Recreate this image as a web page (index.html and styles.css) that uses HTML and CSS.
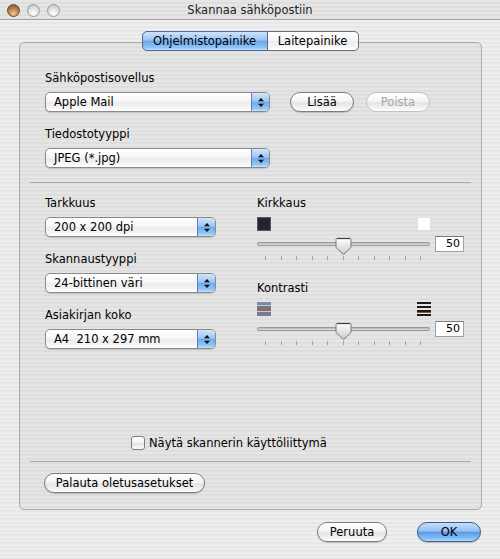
FILE: index.html
```html
<!DOCTYPE html>
<html lang="fi">
  <head>
    <meta charset="UTF-8" />
    <meta name="viewport" content="width=device-width, initial-scale=1.0" />
    <title>Skannaa sähköpostiin</title>
    <link rel="stylesheet" href="styles.css">
  </head>
  <body>
    <div class="window">
      <div class="titlebar">
        <div class="lights">
          <span class="light light-close"></span>
          <span class="light"></span>
          <span class="light"></span>
        </div>
        <div class="title">Skannaa sähköpostiin</div>
      </div>

      <div class="tabs">
        <span class="tab tab-active">Ohjelmistopainike</span>
        <span class="tab tab-plain">Laitepainike</span>
      </div>

      <div class="groupbox">
        <div class="section">
          <div class="label">Sähköpostisovellus</div>
          <div class="row">
            <div class="popup popup-wide">
              <span class="popup-text">Apple Mail</span>
              <span class="popup-arrows"><svg width="6" height="9" viewBox="0 0 6 9"><path d="M3 0 L6 3.2 H0 Z M0 5.8 H6 L3 9 Z" fill="#111"/></svg></span>
            </div>
            <button class="button btn-add">Lisää</button>
            <button class="button btn-remove" disabled>Poista</button>
          </div>
          <div class="label label-next">Tiedostotyyppi</div>
          <div class="popup popup-wide">
            <span class="popup-text">JPEG (*.jpg)</span>
            <span class="popup-arrows"><svg width="6" height="9" viewBox="0 0 6 9"><path d="M3 0 L6 3.2 H0 Z M0 5.8 H6 L3 9 Z" fill="#111"/></svg></span>
          </div>
        </div>

        <div class="separator"></div>

        <div class="columns">
          <div class="col-left">
            <div class="label">Tarkkuus</div>
            <div class="popup popup-narrow">
              <span class="popup-text">200 x 200 dpi</span>
              <span class="popup-arrows"><svg width="6" height="9" viewBox="0 0 6 9"><path d="M3 0 L6 3.2 H0 Z M0 5.8 H6 L3 9 Z" fill="#111"/></svg></span>
            </div>
            <div class="label label-next">Skannaustyyppi</div>
            <div class="popup popup-narrow">
              <span class="popup-text">24-bittinen väri</span>
              <span class="popup-arrows"><svg width="6" height="9" viewBox="0 0 6 9"><path d="M3 0 L6 3.2 H0 Z M0 5.8 H6 L3 9 Z" fill="#111"/></svg></span>
            </div>
            <div class="label label-next">Asiakirjan koko</div>
            <div class="popup popup-narrow">
              <span class="popup-text">A4&nbsp; 210 x 297 mm</span>
              <span class="popup-arrows"><svg width="6" height="9" viewBox="0 0 6 9"><path d="M3 0 L6 3.2 H0 Z M0 5.8 H6 L3 9 Z" fill="#111"/></svg></span>
            </div>
          </div>

          <div class="col-right">
            <div class="label">Kirkkaus</div>
            <div class="range-icons">
              <span class="swatch swatch-dark"></span>
              <span class="swatch swatch-light"></span>
            </div>
            <div class="slider-row">
              <div class="slider">
                <div class="track"></div>
                <svg class="thumb" width="17" height="19" viewBox="0 0 17 19">
                  <defs>
                    <linearGradient id="tg1" x1="0" y1="0" x2="0" y2="1">
                      <stop offset="0" stop-color="#ffffff"/>
                      <stop offset="1" stop-color="#c9c9c9"/>
                    </linearGradient>
                  </defs>
                  <path d="M2 1.5 H15 Q16 1.5 16 2.5 V10.5 L8.5 17.5 L1 10.5 V2.5 Q1 1.5 2 1.5 Z" fill="url(#tg1)" stroke="#7a7a7a"/>
                  <path d="M2 1.5 H15" stroke="#4a3a30" stroke-width="1.2"/>
                </svg>
              </div>
              <div class="value">50</div>
            </div>
            <div class="ticks"><i></i><i></i><i></i><i></i><i></i><i></i><i></i><i></i><i></i><i></i><i></i></div>

            <div class="label label-contrast">Kontrasti</div>
            <div class="range-icons">
              <svg width="14" height="14" viewBox="0 0 14 14">
                <rect x="0" y="0" width="14" height="3" fill="#7f8aa6"/>
                <rect x="0" y="3" width="14" height="1" fill="#c8c8c8"/>
                <rect x="0" y="4" width="14" height="3" fill="#6c7898"/>
                <rect x="0" y="7" width="14" height="2" fill="#9a6a48"/>
                <rect x="0" y="9" width="14" height="1" fill="#c8c8c8"/>
                <rect x="0" y="10" width="14" height="4" fill="#737e9c"/>
              </svg>
              <svg width="14" height="14" viewBox="0 0 14 14">
                <rect x="0" y="0" width="14" height="2" fill="#1c1c1c"/>
                <rect x="0" y="4" width="14" height="2" fill="#1c1c1c"/>
                <rect x="0" y="8" width="14" height="2" fill="#1c1c1c"/>
                <rect x="0" y="10" width="14" height="1" fill="#8a5a38"/>
                <rect x="0" y="12" width="14" height="2" fill="#1c1c1c"/>
              </svg>
            </div>
            <div class="slider-row">
              <div class="slider">
                <div class="track"></div>
                <svg class="thumb" width="17" height="19" viewBox="0 0 17 19">
                  <defs>
                    <linearGradient id="tg2" x1="0" y1="0" x2="0" y2="1">
                      <stop offset="0" stop-color="#ffffff"/>
                      <stop offset="1" stop-color="#c9c9c9"/>
                    </linearGradient>
                  </defs>
                  <path d="M2 1.5 H15 Q16 1.5 16 2.5 V10.5 L8.5 17.5 L1 10.5 V2.5 Q1 1.5 2 1.5 Z" fill="url(#tg2)" stroke="#7a7a7a"/>
                  <path d="M2 1.5 H15" stroke="#4a3a30" stroke-width="1.2"/>
                </svg>
              </div>
              <div class="value">50</div>
            </div>
            <div class="ticks"><i></i><i></i><i></i><i></i><i></i><i></i><i></i><i></i><i></i><i></i><i></i></div>
          </div>
        </div>

        <label class="checkbox-row">
          <span class="checkbox"></span>
          <span>Näytä skannerin käyttöliittymä</span>
        </label>

        <div class="separator separator-low"></div>

        <div class="section">
          <button class="button btn-reset">Palauta oletusasetukset</button>
        </div>
      </div>

      <div class="footer">
        <button class="button btn-cancel">Peruuta</button>
        <button class="button btn-ok">OK</button>
      </div>
    </div>
  </body>
</html>
```

FILE: styles.css
```css
* {
    margin: 0;
    padding: 0;
    box-sizing: border-box;
}

body {
    width: 500px;
    height: 559px;
    overflow: hidden;
    font-family: 'DejaVu Sans', 'Liberation Sans', sans-serif;
    font-size: 11.5px;
    color: #000;
}

.window {
    width: 500px;
    height: 559px;
    background: repeating-linear-gradient(to bottom, #eeeeee 0, #eeeeee 2px, #e7e7e7 2px, #e7e7e7 4px);
}

/* Заголовок окна */
.titlebar {
    height: 20px;
    display: grid;
    grid-template-columns: 1fr auto 1fr;
    align-items: center;
    border-bottom: 1px solid #a4a4a4;
    background: repeating-linear-gradient(to bottom, #e6e6e6 0, #e6e6e6 2px, #dedede 2px, #dedede 4px);
}

.lights {
    display: flex;
    gap: 7px;
    padding-left: 7px;
    padding-top: 1px;
}

.light {
    width: 13px;
    height: 13px;
    border-radius: 50%;
    border: 1px solid #9c9c9c;
    background: radial-gradient(circle at 50% 75%, #ffffff 0, #e4e4e4 45%, #bdbdbd 100%);
}

.light-close {
    border-color: #6a4a30;
    background: radial-gradient(circle at 50% 80%, #f0c890 0, #c08850 45%, #7a5030 100%);
}

.title {
    color: #222;
    padding-top: 1px;
}

/* Вкладки */
.tabs {
    position: relative;
    z-index: 1;
    display: flex;
    justify-content: center;
    margin-top: 11px;
}

.tab {
    height: 20px;
    line-height: 18px;
    text-align: center;
    border: 1px solid #6c6c6c;
}

.tab-active {
    width: 126px;
    border-radius: 5px 0 0 5px;
    border-color: #4f6a95;
    background: linear-gradient(to bottom, #cfe3fa 0%, #98c4f2 45%, #6fa8ec 52%, #8cc2f6 85%, #c0e2ff 100%);
}

.tab-plain {
    width: 91px;
    border-left: none;
    border-radius: 0 5px 5px 0;
    background: linear-gradient(to bottom, #ffffff 0%, #f6f6f6 45%, #ececec 55%, #f8f8f8 85%, #ffffff 100%);
}

/* Рамка группы */
.groupbox {
    margin-top: -9px;
    margin-left: 19px;
    width: 463px;
    height: 468px;
    border: 1px solid #ababab;
    border-radius: 5px;
    background-color: rgba(0, 0, 0, 0.035);
    padding-top: 28px;
}

.section {
    padding-left: 25px;
}

.label {
    line-height: 14px;
    margin-bottom: 7px;
}

.label-next {
    margin-top: 15px;
}

.row {
    display: flex;
    align-items: center;
}

.popup {
    height: 20px;
    display: flex;
    align-items: center;
    border: 1px solid #8a8a8a;
    border-radius: 5px;
    background: linear-gradient(to bottom, #ffffff 0%, #f7f7f7 45%, #ebebeb 55%, #f7f7f7 85%, #ffffff 100%);
    box-shadow: 0 1px 1px rgba(0, 0, 0, 0.15);
    overflow: hidden;
}

.popup-wide {
    width: 225px;
}

.popup-narrow {
    width: 171px;
}

.popup-text {
    padding-left: 8px;
    white-space: nowrap;
}

.popup-arrows {
    margin-left: auto;
    width: 18px;
    height: 100%;
    display: flex;
    align-items: center;
    justify-content: center;
    border-left: 1px solid #5f80b4;
    background: linear-gradient(to bottom, #d2e6fb 0%, #9cc8f2 45%, #72aaea 52%, #8ec4f6 85%, #c4e4ff 100%);
}

.button {
    height: 20px;
    font-family: inherit;
    font-size: 11.5px;
    color: #000;
    border: 1px solid #7c7c7c;
    border-radius: 10px;
    background: linear-gradient(to bottom, #ffffff 0%, #f5f5f5 45%, #e4e4e4 55%, #f4f4f4 85%, #ffffff 100%);
    box-shadow: 0 1px 1px rgba(0, 0, 0, 0.18);
}

.button:disabled {
    color: #a6a6a6;
    border-color: #c2c2c2;
    box-shadow: none;
}

.btn-add {
    width: 64px;
    margin-left: 20px;
}

.btn-remove {
    width: 64px;
    margin-left: 12px;
}

.separator {
    height: 1px;
    margin: 14px 10px 0 10px;
    background-color: #a9a9a9;
}

.separator-low {
    margin-top: 11px;
}

/* Колонки */
.columns {
    display: flex;
    padding: 13px 0 0 25px;
    height: 167px;
}

.col-left {
    width: 171px;
}

.col-right {
    margin-left: 41px;
}

.range-icons {
    width: 174px;
    height: 14px;
    display: flex;
    justify-content: space-between;
}

.swatch {
    width: 14px;
    height: 14px;
}

.swatch-dark {
    background-color: #2a2230;
    border: 1px solid #5a5a5a;
}

.swatch-light {
    background-color: #fff;
    border: 1px solid #e0e0e0;
}

.slider-row {
    display: flex;
    margin-top: 6px;
}

.slider {
    position: relative;
    width: 173px;
    height: 20px;
}

.track {
    margin-top: 6px;
    height: 4px;
    border-radius: 2px;
    border: 1px solid #9a9a9a;
    background: linear-gradient(to bottom, #b4b4b4, #e2e2e2);
}

.thumb {
    position: absolute;
    left: 78px;
    top: 1px;
}

.value {
    width: 29px;
    height: 16px;
    margin-left: 5px;
    line-height: 14px;
    text-align: right;
    padding-right: 3px;
    font-size: 11px;
    background-color: #fff;
    border: 1px solid #a0a0a0;
    border-top-color: #7a7a7a;
}

.ticks {
    width: 173px;
    height: 4px;
    display: flex;
    justify-content: space-between;
    padding: 0 9px 0 8px;
}

.ticks i {
    width: 1px;
    height: 4px;
    background-color: #a4a4a4;
}

.label-contrast {
    margin-top: 21px;
}

.range-icons + .slider-row {
    margin-top: 5px;
}

.label + .range-icons {
    margin-top: 0;
}

/* Флажок */
.checkbox-row {
    display: flex;
    align-items: center;
    gap: 4px;
    margin-left: 111px;
    margin-top: 86px;
    height: 14px;
}

.checkbox {
    width: 14px;
    height: 14px;
    border: 1px solid #7e7e7e;
    border-radius: 3px;
    background: linear-gradient(to bottom, #ffffff 0%, #f2f2f2 50%, #e2e2e2 55%, #ffffff 100%);
}

.btn-reset {
    width: 161px;
    margin-top: 11px;
    margin-left: -1px;
}

/* Кнопки внизу */
.footer {
    display: flex;
    justify-content: flex-end;
    gap: 30px;
    margin-top: 12px;
    padding-right: 19px;
}

.btn-cancel {
    width: 70px;
}

.btn-ok {
    width: 64px;
    border-color: #3c5d92;
    background: linear-gradient(to bottom, #c8defa 0%, #92c0f0 45%, #5e9ae6 52%, #84bef6 85%, #b4dcff 100%);
}
```
